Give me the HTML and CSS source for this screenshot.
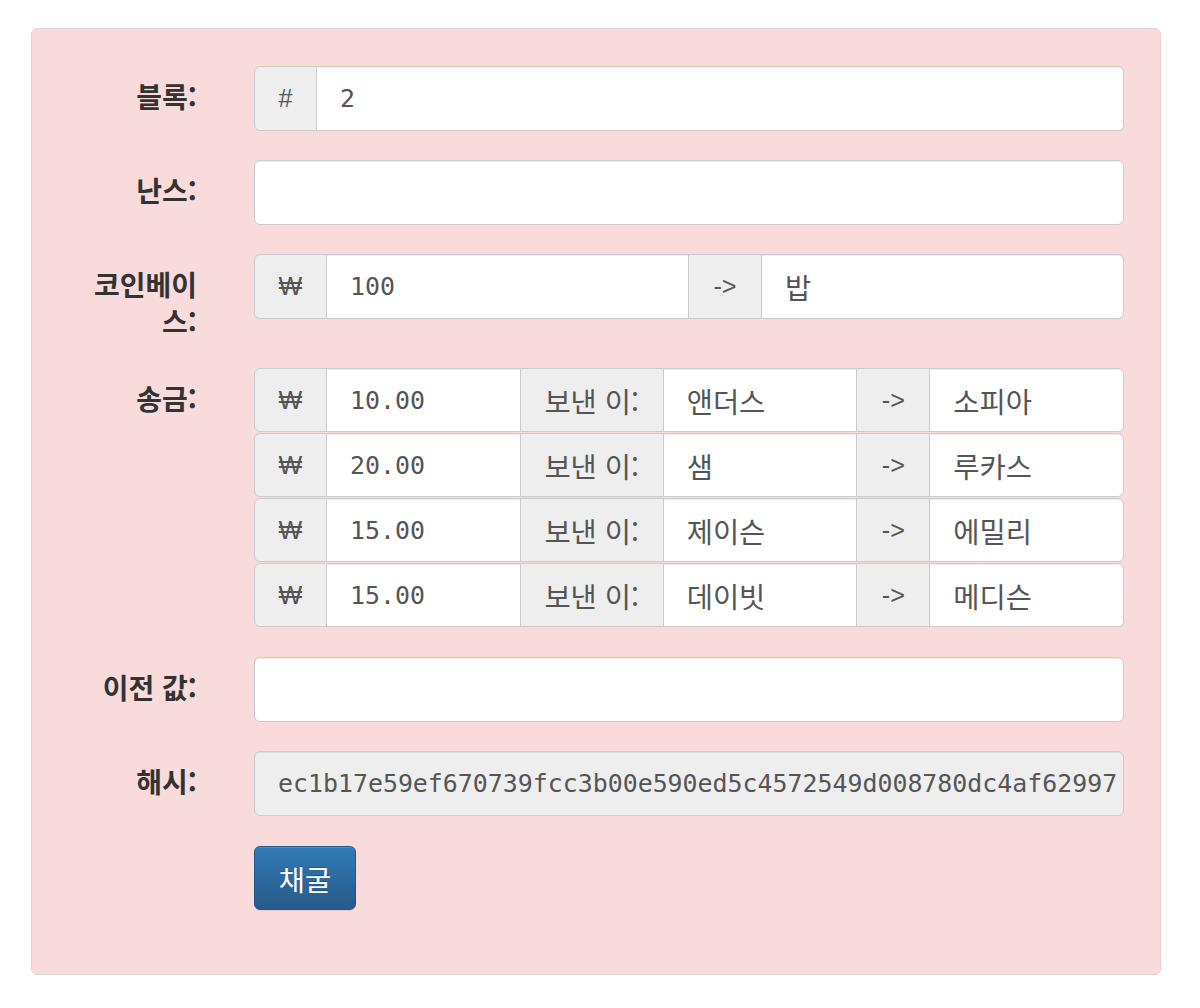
FILE: index.html
```html
<!DOCTYPE html>
<html lang="ko">
<head>
<meta charset="utf-8">
<title>블록</title>
<link rel="stylesheet" href="styles.css">
</head>
<body>
<form class="well">
  <div class="form-row">
    <label class="control-label">블록:</label>
    <div class="input-group">
      <span class="addon addon-hash">#</span>
      <input class="form-control" type="text" value="2">
    </div>
  </div>
  <div class="form-row">
    <label class="control-label">난스:</label>
    <div class="input-group">
      <input class="form-control" type="text" value="">
    </div>
  </div>
  <div class="form-row">
    <label class="control-label">코인베이스:</label>
    <div class="input-group">
      <span class="addon addon-won">₩</span>
      <input class="form-control" type="text" value="100">
      <span class="addon addon-arrow">-&gt;</span>
      <input class="form-control ko" type="text" value="밥">
    </div>
  </div>
  <div class="form-row">
    <label class="control-label">송금:</label>
    <div class="tx-list">
      <div class="input-group tx">
        <span class="addon addon-won">₩</span>
        <input class="form-control" type="text" value="10.00">
        <span class="addon addon-from">보낸 이:</span>
        <input class="form-control ko" type="text" value="앤더스">
        <span class="addon addon-arrow">-&gt;</span>
        <input class="form-control ko" type="text" value="소피아">
      </div>
      <div class="input-group tx">
        <span class="addon addon-won">₩</span>
        <input class="form-control" type="text" value="20.00">
        <span class="addon addon-from">보낸 이:</span>
        <input class="form-control ko" type="text" value="샘">
        <span class="addon addon-arrow">-&gt;</span>
        <input class="form-control ko" type="text" value="루카스">
      </div>
      <div class="input-group tx">
        <span class="addon addon-won">₩</span>
        <input class="form-control" type="text" value="15.00">
        <span class="addon addon-from">보낸 이:</span>
        <input class="form-control ko" type="text" value="제이슨">
        <span class="addon addon-arrow">-&gt;</span>
        <input class="form-control ko" type="text" value="에밀리">
      </div>
      <div class="input-group tx">
        <span class="addon addon-won">₩</span>
        <input class="form-control" type="text" value="15.00">
        <span class="addon addon-from">보낸 이:</span>
        <input class="form-control ko" type="text" value="데이빗">
        <span class="addon addon-arrow">-&gt;</span>
        <input class="form-control ko" type="text" value="메디슨">
      </div>
    </div>
  </div>
  <div class="form-row">
    <label class="control-label">이전 값:</label>
    <div class="input-group">
      <input class="form-control" type="text" value="">
    </div>
  </div>
  <div class="form-row">
    <label class="control-label">해시:</label>
    <div class="input-group">
      <input class="form-control readonly" type="text" readonly value="ec1b17e59ef670739fcc3b00e590ed5c4572549d008780dc4af62997a1b2c3d4">
    </div>
  </div>
  <div class="form-row">
    <span class="spacer"></span>
    <div class="actions">
      <button class="btn-primary" type="button">채굴</button>
    </div>
  </div>
</form>
</body>
</html>
```

FILE: styles.css
```css
* {
  box-sizing: border-box;
}

html, body {
  margin: 0;
  padding: 0;
  background: #ffffff;
}

body {
  font-family: "Liberation Sans", "Noto Sans CJK KR", sans-serif;
  color: #333333;
}

.well {
  width: 1130px;
  margin: 28px 0 0 31px;
  padding: 37px 36px 35px 44px;
  background: #f9dbdc;
  border: 1px solid #e6d3d3;
  border-radius: 6px;
}

.form-row {
  display: grid;
  grid-template-columns: 121px minmax(0, 1fr);
  column-gap: 57px;
  margin-bottom: 29px;
}

.control-label {
  font-family: "Noto Sans CJK KR", "Liberation Sans", sans-serif;
  font-weight: bold;
  font-size: 28px;
  line-height: 36.5px;
  padding-top: 12px;
  text-align: right;
  color: #333333;
}

.input-group {
  display: flex;
  min-width: 0;
  height: 65px;
}

.tx-list {
  display: flex;
  flex-direction: column;
  gap: 1px;
  min-width: 0;
  padding-bottom: 1px;
}

.input-group.tx {
  height: 64px;
}

.addon {
  flex: none;
  display: flex;
  align-items: center;
  justify-content: center;
  background: #eeeeee;
  border: 1px solid #cccccc;
  color: #555555;
  font-family: "Liberation Sans", "Noto Sans CJK KR", sans-serif;
  font-size: 25.2px;
  margin-left: -1px;
}

.addon:first-child {
  margin-left: 0;
  border-radius: 6px 0 0 6px;
}

.addon-hash { width: 63px; }
.addon-won { width: 73px; }
.addon-arrow { width: 74px; }
.addon-from {
  width: 144px;
  font-family: "Noto Sans CJK KR", "Liberation Sans", sans-serif;
  font-size: 28.5px;
}

.form-control {
  flex: 1 1 0;
  width: 0;
  min-width: 0;
  height: 100%;
  margin: 0 0 0 -1px;
  padding: 0 22px 0 23px;
  background: #ffffff;
  border: 1px solid #cccccc;
  border-radius: 0;
  box-shadow: inset 0 1px 1px rgba(0, 0, 0, 0.075);
  font-family: "DejaVu Sans Mono", "Noto Sans CJK KR", monospace;
  font-size: 24.9px;
  color: #555555;
  outline: none;
}

.form-control.ko {
  font-family: "Noto Sans CJK KR", sans-serif;
  font-size: 28.5px;
}

.form-control:first-child {
  margin-left: 0;
  border-top-left-radius: 6px;
  border-bottom-left-radius: 6px;
}

.form-control:last-child {
  border-top-right-radius: 6px;
  border-bottom-right-radius: 6px;
}

.form-control.readonly {
  background: #eeeeee;
  padding-right: 5px;
}

.actions {
  display: flex;
  padding-top: 1px;
}

.btn-primary {
  width: 102px;
  height: 64px;
  padding: 0;
  border: 1px solid #245580;
  border-radius: 6px;
  background: linear-gradient(to bottom, #337ab7 0%, #265a88 100%);
  color: #ffffff;
  font-family: "Noto Sans CJK KR", "Liberation Sans", sans-serif;
  font-size: 28.5px;
  text-shadow: 0 -1px 0 rgba(0, 0, 0, 0.2);
  box-shadow: inset 0 1px 0 rgba(255, 255, 255, 0.15), 0 1px 1px rgba(0, 0, 0, 0.075);
  cursor: pointer;
}
```
